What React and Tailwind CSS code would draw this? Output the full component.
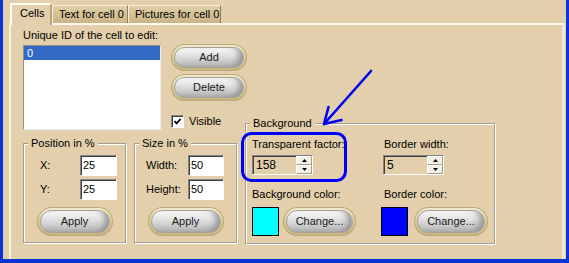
const sunken =
  "border border-t-[#858585] border-l-[#858585] border-r-white border-b-white shadow-[inset_1px_1px_0_#3f3f3f]";

function Btn({ className, children }) {
  return (
    <div
      className={
        "shrink-0 rounded-full bg-[linear-gradient(180deg,#f4ecd2_0%,#dccd9e_45%,#c5b37d_100%)] p-[3px] shadow-[inset_0_0_0_1px_#bba977] " +
        className
      }
    >
      <div className="flex h-full w-full items-center justify-center rounded-full border border-[#a3a19a] bg-[linear-gradient(180deg,#fbfbfb_0%,#e4e4e4_35%,#cbcbcb_70%,#b3b3b3_100%)] text-[#1a1a1a] shadow-[inset_-6px_-1px_7px_-3px_#8a8a8a]">
        {children}
      </div>
    </div>
  );
}

function Field({ className, children }) {
  return (
    <div className={"flex h-[21px] items-center bg-white pl-[2px] " + sunken + " " + className}>
      {children}
    </div>
  );
}

function Spinner({ value }) {
  return (
    <div className={"flex h-[20px] w-[61px] bg-[#e3cfab] " + sunken}>
      <div className="flex flex-1 items-center pl-[3px] text-[12px]">{value}</div>
      <div className="flex w-[16px] flex-col">
        <div className="flex flex-1 items-center justify-center border border-t-white border-l-white border-r-[#a39c8c] border-b-[#a39c8c] bg-[#f3f0e6]">
          <svg width="5" height="3" viewBox="0 0 5 3">
            <polygon points="2.5,0 5,3 0,3" fill="#000" />
          </svg>
        </div>
        <div className="flex flex-1 items-center justify-center border border-t-white border-l-white border-r-[#a39c8c] border-b-[#a39c8c] bg-[#f3f0e6]">
          <svg width="5" height="3" viewBox="0 0 5 3">
            <polygon points="0,0 5,0 2.5,3" fill="#000" />
          </svg>
        </div>
      </div>
    </div>
  );
}

function Group({ title, className, children }) {
  return (
    <fieldset
      className={
        "shrink-0 border border-[#a29e93] shadow-[inset_1px_1px_0_#fff,1px_1px_0_#fff] " + className
      }
    >
      <legend className="ml-[4px] bg-[#e3cfab] px-[3px]">{title}</legend>
      {children}
    </fieldset>
  );
}

function Tabs() {
  return (
    <div className="flex h-[23px] shrink-0 items-end pl-[7px] pt-[3px]">
      <div className="relative z-10 mb-[-2px] flex h-[22px] w-[42px] border-l-2 border-t-2 border-r-2 border-l-[#fffbf0] border-t-[#fffbf0] border-r-[#b6a57f] bg-[#e3cfab] pl-[8px] pt-[2px]">
        Cells
      </div>
      <div className="flex h-[18px] w-[76px] border-l border-t border-r border-l-[#f6eedb] border-t-[#f6eedb] border-r-[#8e7f60] bg-[linear-gradient(180deg,#e0cfa6,#c9b487)] pl-[6px] pt-[2px]">
        Text for cell 0
      </div>
      <div className="flex h-[18px] w-[93px] border-l border-t border-r border-l-[#f6eedb] border-t-[#f6eedb] border-r-[#8e7f60] bg-[linear-gradient(180deg,#e0cfa6,#c9b487)] pl-[6px] pt-[2px]">
        Pictures for cell 0
      </div>
    </div>
  );
}

function Panel() {
  return (
    <div className="ml-[6px] mr-[1px] flex flex-1 border-l-2 border-t-2 border-r-[3px] border-l-[#f8f2e2] border-t-[#fffbf0] border-r-[#efe8d6] pl-[12px]">
      <div className="flex w-[214px] shrink-0 flex-col pt-[4px]">
        <div>Unique ID of the cell to edit:</div>
        <div className="mt-[2px] flex items-start">
          <div className="mt-[1px] h-[85px] w-[138px] shrink-0 border border-t-[#8f8f8f] border-l-[#8f8f8f] border-r-[#ececec] border-b-[#ececec] bg-white">
            <div className="flex h-[14px] items-center bg-[#316ac5] pl-[3px] text-white">0</div>
          </div>
          <div className="ml-[10px] flex w-[76px] shrink-0 flex-col">
            <Btn className="h-[27px] w-[76px]">Add</Btn>
            <Btn className="mt-[3px] h-[27px] w-[76px]">Delete</Btn>
            <div className="mt-[14px] flex items-center">
              <div className={"flex h-[13px] w-[13px] items-center justify-center bg-white " + sunken}>
                <svg width="9" height="9" viewBox="0 0 9 9">
                  <path d="M1.5 4.2 L3.6 6.4 L7.6 2" fill="none" stroke="#000" strokeWidth="1.8" />
                </svg>
              </div>
              <span className="ml-[5px]">Visible</span>
            </div>
          </div>
        </div>
        <div className="mt-[7px] flex gap-[8px]">
          <Group title="Position in %" className="w-[103px]">
            <div className="pl-[16px] pt-[5px]">
              <div className="flex items-center">
                <span className="w-[40px]">X:</span>
                <Field className="w-[37px]">25</Field>
              </div>
              <div className="mt-[3px] flex items-center">
                <span className="w-[40px]">Y:</span>
                <Field className="w-[37px]">25</Field>
              </div>
            </div>
            <div className="mt-[7px] flex justify-center pb-[6px]">
              <Btn className="h-[29px] w-[76px]">Apply</Btn>
            </div>
          </Group>
          <Group title="Size in %" className="w-[103px]">
            <div className="pl-[11px] pt-[5px]">
              <div className="flex items-center">
                <span className="w-[42px]">Width:</span>
                <Field className="w-[36px]">50</Field>
              </div>
              <div className="mt-[3px] flex items-center">
                <span className="w-[42px]">Height:</span>
                <Field className="w-[36px]">50</Field>
              </div>
            </div>
            <div className="mt-[7px] flex justify-center pb-[6px]">
              <Btn className="h-[29px] w-[76px]">Apply</Btn>
            </div>
          </Group>
        </div>
      </div>
      <div className="ml-[8px] mt-[92px]">
        <Group title="Background" className="w-[250px]">
          <div className="flex pb-[7px] pl-[6px] pt-[8px]">
            <div className="flex w-[131px] shrink-0 flex-col">
              <div>Transparent factor:</div>
              <div className="mt-[4px]">
                <Spinner value="158" />
              </div>
              <div className="mt-[13px]">Background color:</div>
              <div className="mt-[6px] flex">
                <div className="h-[29px] w-[27px] border border-black bg-[#00ffff]" />
                <Btn className="ml-[4px] h-[29px] w-[73px]">Change...</Btn>
              </div>
            </div>
            <div className="flex flex-col">
              <div className="pl-[1px]">Border width:</div>
              <div className="mt-[4px]">
                <Spinner value="5" />
              </div>
              <div className="mt-[13px] pl-[1px]">Border color:</div>
              <div className="ml-[-2px] mt-[6px] flex">
                <div className="h-[29px] w-[27px] border border-black bg-[#0000ff]" />
                <Btn className="ml-[6px] h-[29px] w-[74px]">Change...</Btn>
              </div>
            </div>
          </div>
        </Group>
      </div>
    </div>
  );
}

export default function App() {
  return (
    <div className="relative flex h-[263px] w-[569px] flex-col bg-[#0b34d6] pb-[4px] pl-[3px] pr-[3px] font-['Liberation_Sans',Arial,sans-serif] text-[11px] leading-[13px] text-black">
      <div className="flex min-h-0 flex-1 flex-col overflow-hidden bg-[#e3cfab]">
        <Tabs />
        <Panel />
      </div>
      <svg
        className="pointer-events-none absolute left-0 top-0"
        width="569"
        height="263"
        viewBox="0 0 569 263"
      >
        <rect x="242.5" y="133.5" width="103" height="47" rx="9" fill="none" stroke="#0000f4" strokeWidth="3" />
        <path d="M371 71 L324 124" stroke="#0000f4" strokeWidth="2.6" strokeLinecap="round" fill="none" />
        <path d="M328.5 107 L324 124 L341.5 120" stroke="#0000f4" strokeWidth="2.6" strokeLinecap="round" strokeLinejoin="round" fill="none" />
      </svg>
    </div>
  );
}
